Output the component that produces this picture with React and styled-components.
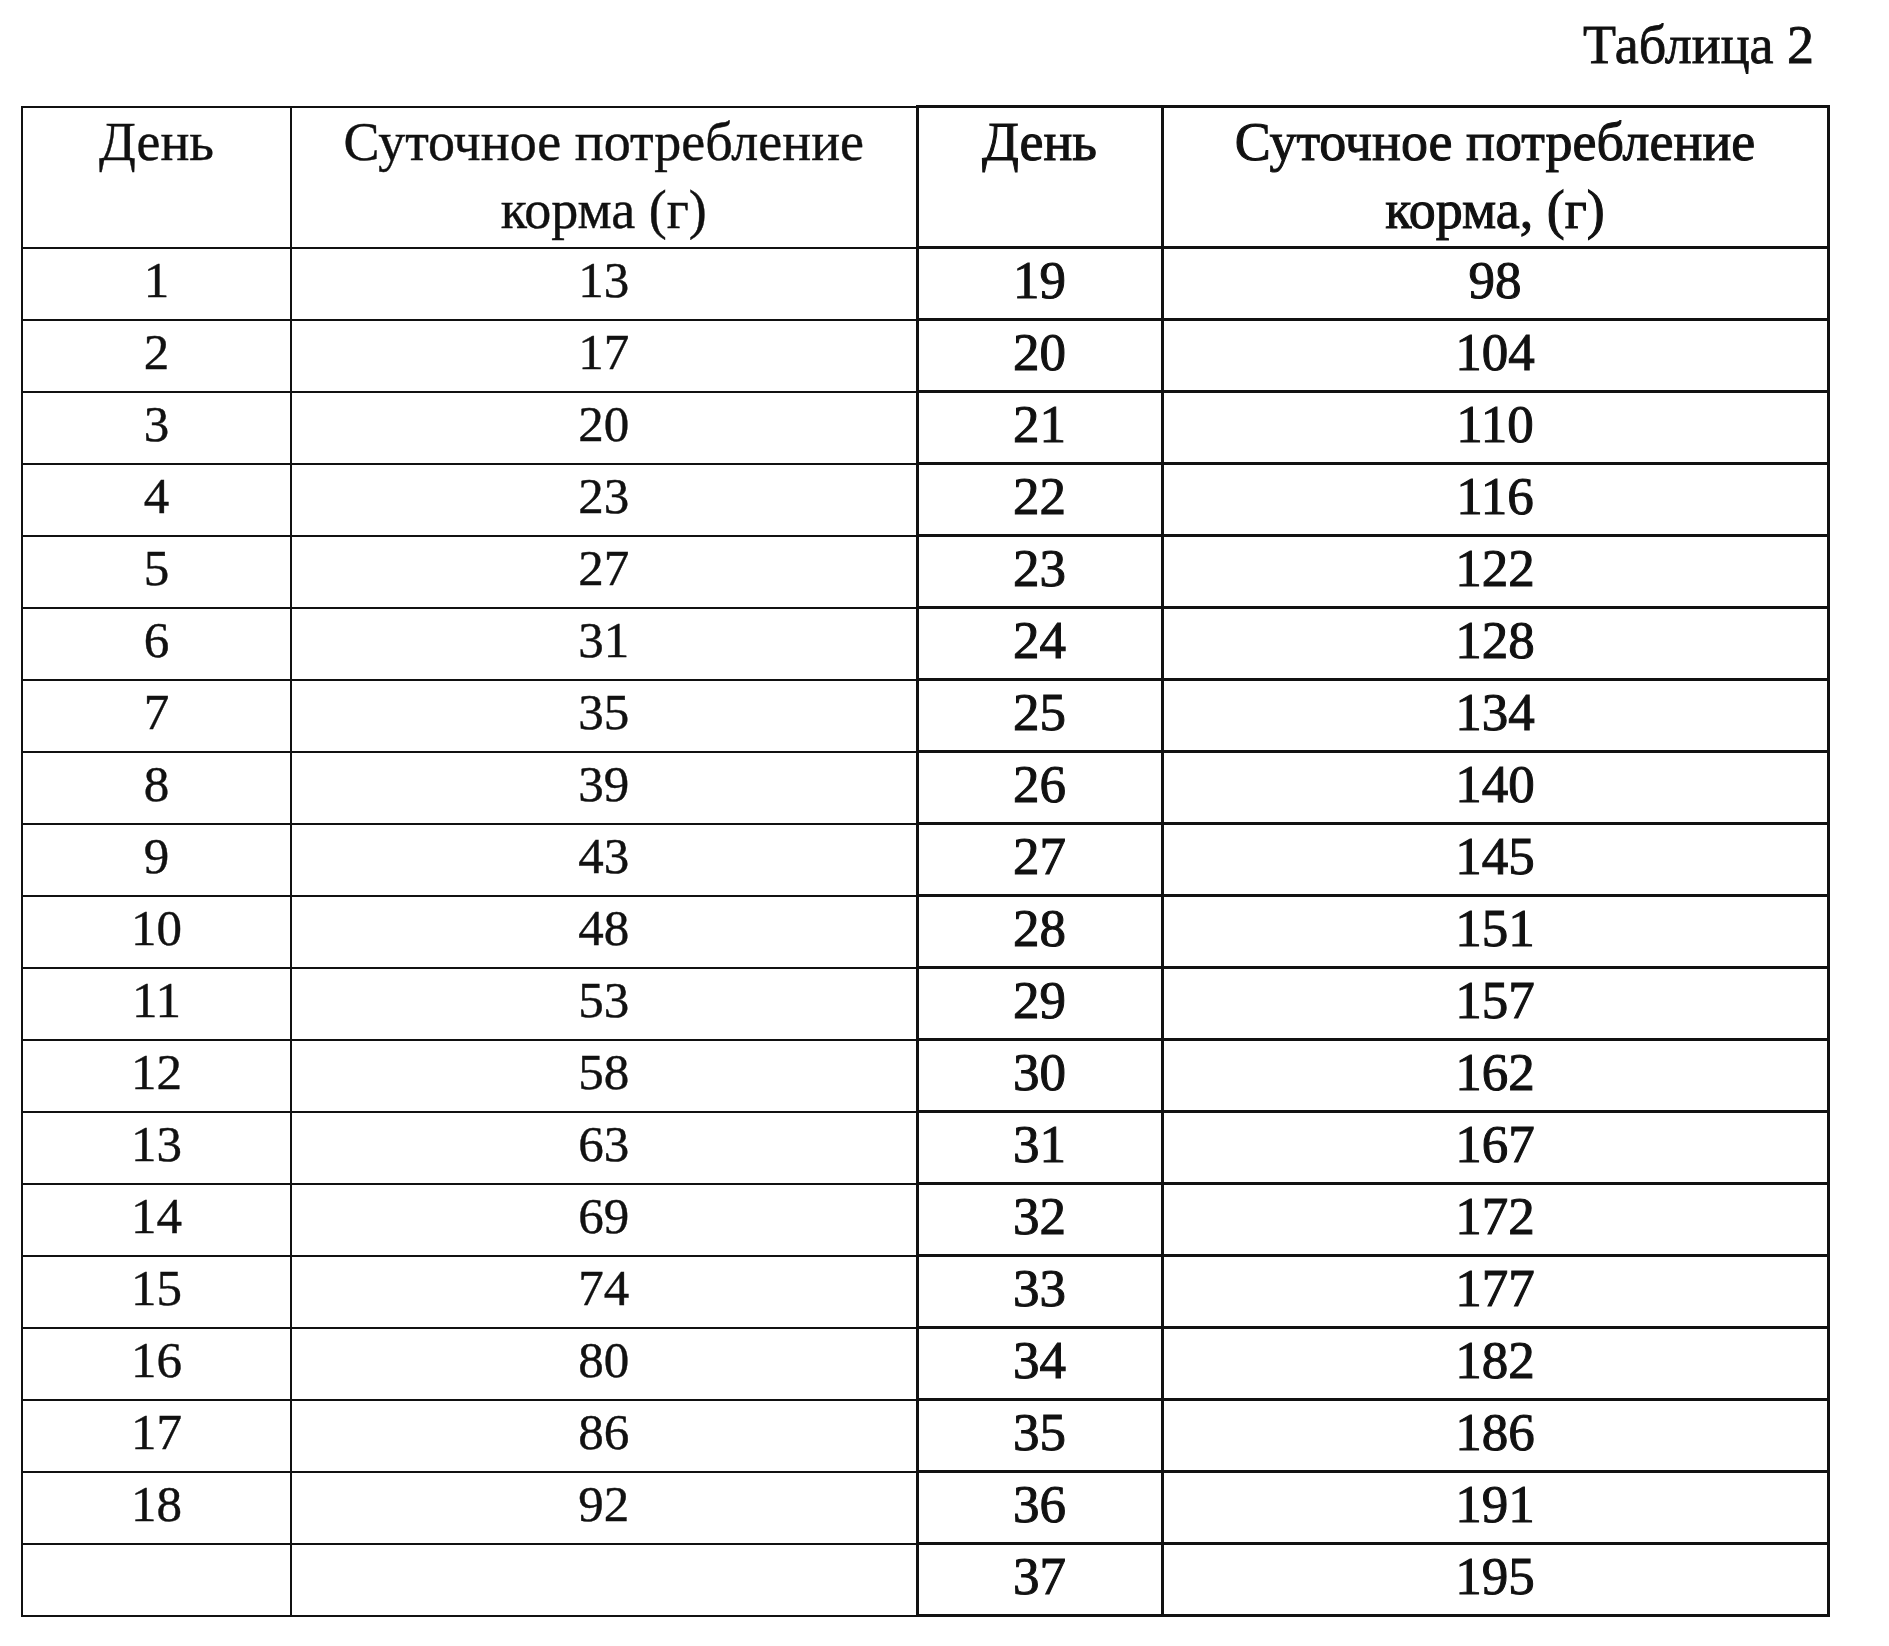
import React from 'react';
import styled, { createGlobalStyle } from 'styled-components';

const GlobalStyle = createGlobalStyle`
  html, body {
    margin: 0;
    padding: 0;
    background: #ffffff;
  }
  body {
    font-family: "Liberation Serif", "Times New Roman", serif;
    color: #111111;
  }
`;

// left half: days 1-18, right half: days 19-37
const leftRows = [13, 17, 20, 23, 27, 31, 35, 39, 43, 48, 53, 58, 63, 69, 74, 80, 86, 92];
const rightRows = [
  98, 104, 110, 116, 122, 128, 134, 140, 145, 151, 157, 162, 167, 172, 177, 182, 186, 191, 195,
];

const columnWidths = [269, 626, 245, 666];

const App = () => {
  const rows = rightRows.map((value, i) => ({
    leftDay: i < leftRows.length ? i + 1 : '',
    leftFeed: i < leftRows.length ? leftRows[i] : '',
    rightDay: i + 19,
    rightFeed: value,
  }));

  return (
    <Page>
      <GlobalStyle />
      <Caption>Таблица 2</Caption>
      <Table>
        <colgroup>
          {columnWidths.map((w, i) => (
            <col key={i} style={{ width: w }} />
          ))}
        </colgroup>
        <thead>
          <HeadRow>
            <HeadCell>День</HeadCell>
            <HeadCell>
              Суточное потребление
              <br />
              корма (г)
            </HeadCell>
            <HeadCell $heavy>День</HeadCell>
            <HeadCell $heavy>
              Суточное потребление
              <br />
              корма, (г)
            </HeadCell>
          </HeadRow>
        </thead>
        <tbody>
          {rows.map((row) => (
            <Row key={row.rightDay}>
              <Cell>{row.leftDay}</Cell>
              <Cell>{row.leftFeed}</Cell>
              <Cell $heavy>{row.rightDay}</Cell>
              <Cell $heavy>{row.rightFeed}</Cell>
            </Row>
          ))}
        </tbody>
      </Table>
    </Page>
  );
};

const Page = styled.div`
  padding: 14px 0 30px 21px;
  width: 1806px;
`;

const Caption = styled.div`
  font-size: 54px;
  line-height: 62px;
  text-align: right;
  padding-right: 13px;
  margin-bottom: 29px;
  -webkit-text-stroke: 0.8px #111111;
`;

const Table = styled.table`
  border-collapse: collapse;
  table-layout: fixed;
  width: 1806px;
`;

const HeadRow = styled.tr`
  height: 141px;
`;

const Row = styled.tr`
  height: 72px;
`;

const HeadCell = styled.th`
  border: ${({ $heavy }) => ($heavy ? '3px' : '2px')} solid #111111;
  padding: 0;
  vertical-align: top;
  text-align: center;
  font-weight: normal;
  font-size: 54px;
  line-height: 68px;
  -webkit-text-stroke: ${({ $heavy }) => ($heavy ? '1px #111111' : '0.4px #111111')};
`;

const Cell = styled.td`
  border: ${({ $heavy }) => ($heavy ? '3px' : '2px')} solid #111111;
  padding: 0;
  vertical-align: top;
  text-align: center;
  font-size: ${({ $heavy }) => ($heavy ? '53px' : '51px')};
  line-height: 62px;
  -webkit-text-stroke: ${({ $heavy }) => ($heavy ? '1px #111111' : '0.4px #111111')};
`;

export default App;
